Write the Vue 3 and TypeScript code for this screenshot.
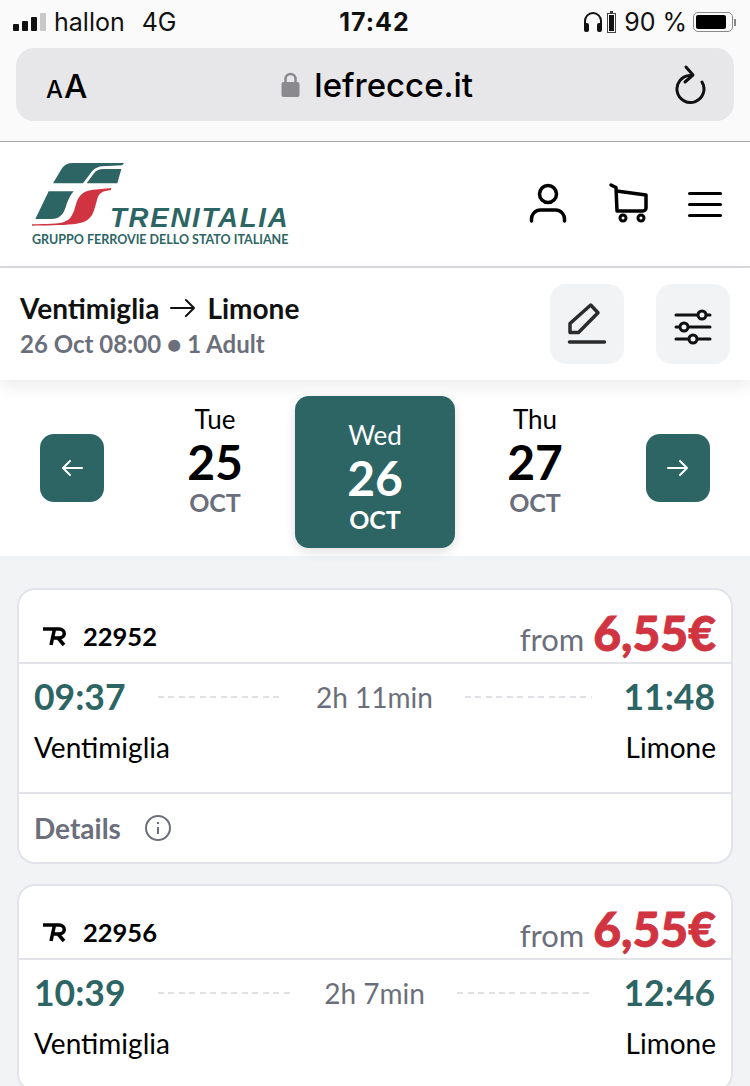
<template>
  <div class="page">
    <div class="chrome">
      <div class="status">
        <div class="status-left">
          <div class="signal">
            <i style="height: 7px"></i><i style="height: 10px"></i><i style="height: 14px"></i><i class="off" style="height: 18px"></i>
          </div>
          <span class="carrier">hallon</span>
          <span class="net">4G</span>
        </div>
        <div class="clock">17:42</div>
        <div class="status-right">
          <svg width="20" height="22" viewBox="0 0 20 22" fill="none">
            <path d="M2 15v-5a8 8 0 0 1 16 0v5" stroke="#111" stroke-width="2" />
            <rect x="1" y="12" width="5" height="9" rx="2" fill="#111" />
            <rect x="14" y="12" width="5" height="9" rx="2" fill="#111" />
          </svg>
          <svg width="9" height="22" viewBox="0 0 9 22">
            <rect x="3" y="0" width="3" height="2" fill="#333" />
            <rect x="0.500" y="2.500" width="8" height="19" fill="none" stroke="#444" />
            <rect x="2" y="4" width="5" height="16" fill="#111" />
          </svg>
          <span class="pct">90 %</span>
          <div class="battery"><div class="battery-fill"></div></div>
          <i class="battery-nub"></i>
        </div>
      </div>
      <div class="urlbar">
        <div class="aa"><small>A</small>A</div>
        <div class="url">
          <svg width="19" height="28" viewBox="0 0 19 28" fill="none">
            <path d="M4.500 12V8a5 5 0 0 1 10 0v4" stroke="#8a8a8e" stroke-width="2.500" />
            <rect x="0.500" y="11" width="18" height="15" rx="2" fill="#8a8a8e" />
          </svg>
          <span>lefrecce.it</span>
        </div>
        <svg class="reload" width="32" height="42" viewBox="0 0 32 42" fill="none" stroke="#111" stroke-width="3" stroke-linecap="round" stroke-linejoin="round">
          <path d="M15 11.500A13.500 13.500 0 1 0 27 18" />
          <path d="M11 3l7 8-8 7" />
        </svg>
      </div>
    </div>

    <header class="site-header">
      <div class="logo">
        <svg class="emblem" width="105" height="72" viewBox="0 0 315 216">
          <path d="M75 76 102 31C109 20 120 15 135 15H288L283 22 222 25C204 27 194 36 186 48L165 76Z" fill="#2c6564" />
          <path d="M176 76 198 46C206 36 214 33 226 33H280L268 76Z" fill="#2c6564" />
          <path d="M22 183 62 100H137C126 112 118 130 113 148 106 170 94 183 70 183Z" fill="#2c6564" />
          <path d="M12 199C60 198 88 198 108 192 130 185 137 165 143 142 150 116 162 100 190 96L250 90 248 97C224 99 214 104 208 122 204 136 201 150 195 165 186 186 166 196 135 199 100 202 50 203 12 203Z" fill="#cf3440" />
        </svg>
        <div class="logo-name">TRENITALIA</div>
        <div class="logo-sub">GRUPPO FERROVIE DELLO STATO ITALIANE</div>
      </div>
      <div class="header-icons">
        <svg width="40" height="44" viewBox="0 0 40 44" fill="none" stroke="#000" stroke-width="3.500" stroke-linecap="round">
          <circle cx="20" cy="12" r="8.500" />
          <path d="M3.500 39v-2a9 9 0 0 1 9-9h15a9 9 0 0 1 9 9v2" />
        </svg>
        <svg width="40" height="44" viewBox="0 0 40 44" fill="none" stroke="#000" stroke-width="3.500" stroke-linecap="round" stroke-linejoin="round">
          <path d="M3 3l5 2.500L9 29h26a3 3 0 0 0 3-3V13L8.500 9" />
          <circle cx="15" cy="36" r="3" stroke-width="3" />
          <circle cx="33" cy="36" r="3" stroke-width="3" />
        </svg>
        <div class="burger"><i></i><i></i><i></i></div>
      </div>
    </header>

    <section class="summary">
      <div>
        <div class="route">
          <span>Ventimiglia</span>
          <svg width="28" height="20" viewBox="0 0 28 20" fill="none" stroke="#111" stroke-width="2" stroke-linecap="round" stroke-linejoin="round">
            <path d="M2 10h23M17 2l8 8-8 8" />
          </svg>
          <span>Limone</span>
        </div>
        <div class="trip-meta">26 Oct 08:00 ● 1 Adult</div>
      </div>
      <div class="summary-actions">
        <button class="tool">
          <svg width="44" height="46" viewBox="0 0 44 46" fill="none" stroke="#2b2b2b" stroke-width="3.500" stroke-linecap="round" stroke-linejoin="round">
            <path d="M5 31.500v-9L25.700 4l7.300 7.700-19.500 19.800z" />
            <path d="M4.500 41h35" />
          </svg>
        </button>
        <button class="tool">
          <svg class="sliders" width="38" height="36" viewBox="0 0 38 36" fill="none" stroke="#111" stroke-width="3" stroke-linecap="round">
            <path d="M2 6h34M2 18h34M2 30h34" />
            <circle cx="28" cy="6" r="4" fill="#f2f3f5" />
            <circle cx="10" cy="18" r="4" fill="#f2f3f5" />
            <circle cx="19" cy="30" r="4" fill="#f2f3f5" />
          </svg>
        </button>
      </div>
    </section>

    <section class="dates">
      <button class="nav">
        <svg width="24" height="20" viewBox="0 0 24 20" fill="none" stroke="#fff" stroke-width="2" stroke-linecap="round" stroke-linejoin="round">
          <path d="M22 10H3M10 3l-7 7 7 7" />
        </svg>
      </button>
      <div class="day-strip">
        <div v-for="d in days" :key="d.num" class="day" :class="{ active: d.active }">
          <div class="dow">{{ d.dow }}</div>
          <div class="num">{{ d.num }}</div>
          <div class="mon">OCT</div>
        </div>
      </div>
      <button class="nav">
        <svg width="24" height="20" viewBox="0 0 24 20" fill="none" stroke="#fff" stroke-width="2" stroke-linecap="round" stroke-linejoin="round">
          <path d="M2 10h19M14 3l7 7-7 7" />
        </svg>
      </button>
    </section>

    <main class="results">
      <article v-for="(t, i) in trains" :key="t.id" class="card">
        <div class="card-top">
          <div class="train">
            <svg width="24" height="22" viewBox="0 0 24 22" fill="none" stroke="#000" stroke-width="3.500">
              <path d="M0 4h16c7 0 7 9 0 9H8M11.500 4 8 20M15 13l6 7" />
            </svg>
            <span>{{ t.id }}</span>
          </div>
          <div class="price"><span class="from">from</span> <b>6,55€</b></div>
        </div>
        <div class="card-body">
          <div class="times">
            <span class="time">{{ t.dep }}</span>
            <span class="dash"></span>
            <span class="dur">{{ t.dur }}</span>
            <span class="dash"></span>
            <span class="time">{{ t.arr }}</span>
          </div>
          <div class="places">
            <span>Ventimiglia</span>
            <span>Limone</span>
          </div>
        </div>
        <!-- second card's footer falls below the fold -->
        <div v-if="i === 0" class="card-foot">
          <span>Details</span>
          <svg width="26" height="26" viewBox="0 0 26 26" fill="none" stroke="#6b6f7b" stroke-width="2">
            <circle cx="13" cy="13" r="12" />
            <path d="M13 12v7M13 7v2" />
          </svg>
        </div>
      </article>
    </main>
  </div>
</template>

<script setup lang="ts">
const days = [
  { dow: 'Tue', num: 25, active: false },
  { dow: 'Wed', num: 26, active: true },
  { dow: 'Thu', num: 27, active: false }
]

const trains = [
  { id: '22952', dep: '09:37', arr: '11:48', dur: '2h 11min' },
  { id: '22956', dep: '10:39', arr: '12:46', dur: '2h 7min' }
]
</script>

<style>
html,
body {
  margin: 0;
  height: 1086px;
  overflow: hidden;
  background: #f2f3f5;
}
</style>

<style scoped>
.page {
  width: 750px;
  height: 1086px;
  overflow: hidden;
  font-family: Lato, "Liberation Sans", sans-serif;
  background: #f2f3f5;
  color: #000;
}

.chrome {
  height: 142px;
  box-sizing: border-box;
  background: #fafafa;
  border-bottom: 1px solid #aaa;
  padding: 0 16px;
  font-family: Inter, "Liberation Sans", sans-serif;
}

.status {
  height: 44px;
  margin-bottom: 4px;
  display: flex;
  align-items: center;
  justify-content: space-between;
  font-size: 25px;
  color: #111;
}

.status-left {
  display: flex;
  align-items: center;
  width: 270px;
  margin-left: -3px;
}

.signal {
  display: flex;
  align-items: flex-end;
  gap: 3px;
  height: 18px;
  margin-right: 8px;
}

.signal i {
  width: 6px;
  background: #111;
  border-radius: 1px;
}

.signal i.off {
  background: #c8c8c8;
}

.carrier {
  margin-right: 17px;
}

.clock {
  font-weight: 700;
  letter-spacing: 1px;
}

.status-right {
  width: 270px;
  display: flex;
  align-items: center;
  justify-content: flex-end;
  gap: 4px;
  margin-right: -2px;
}

.pct {
  margin: 0 2px 0 4px;
}

.battery {
  width: 40px;
  height: 20px;
  box-sizing: border-box;
  border: 1.500px solid #888;
  border-radius: 5px;
  padding: 2px;
}

.battery-fill {
  width: 88%;
  height: 100%;
  background: #000;
  border-radius: 2px;
}

.battery-nub {
  width: 2px;
  height: 7px;
  margin-left: -3px;
  background: #888;
}

.urlbar {
  height: 73px;
  background: #e7e7e9;
  border-radius: 18px;
  display: flex;
  align-items: center;
  justify-content: space-between;
  padding: 0 27px 0 30px;
}

.aa {
  font-size: 33px;
  line-height: 1;
  font-weight: 500;
  margin-top: 4px;
}

.aa small {
  font-size: 24px;
  margin-right: 1px;
}

.url {
  display: flex;
  align-items: center;
  gap: 14px;
  font-size: 33px;
  font-weight: 500;
  margin-right: 8px;
}

.site-header {
  height: 126px;
  box-sizing: border-box;
  background: #fff;
  border-bottom: 2px solid #d9d9de;
  display: flex;
  align-items: center;
  justify-content: space-between;
  padding: 0 28px 0 32px;
}

.logo {
  position: relative;
  width: 256px;
  height: 92px;
}

.emblem {
  position: absolute;
  left: -4px;
  top: 0;
}

.logo-name {
  position: absolute;
  left: 78px;
  top: 44px;
  font: italic 700 27.500px "Liberation Sans", sans-serif;
  color: #2c6564;
  letter-spacing: 1.800px;
  white-space: nowrap;
}

.logo-sub {
  position: absolute;
  left: 0;
  top: 74px;
  font-size: 12.500px;
  font-weight: 700;
  color: #2c6564;
  white-space: nowrap;
}

.header-icons {
  display: flex;
  align-items: center;
  gap: 40px;
}

.burger {
  width: 34px;
  display: flex;
  flex-direction: column;
  gap: 8px;
}

.burger i {
  height: 3px;
  background: #000;
  border-radius: 2px;
}

.summary {
  position: relative;
  z-index: 2;
  height: 112px;
  box-sizing: border-box;
  background: #fff;
  box-shadow: 0 6px 16px rgba(0, 0, 0, 0.08);
  display: flex;
  align-items: center;
  justify-content: space-between;
  padding: 0 20px;
}

.route {
  display: flex;
  align-items: center;
  gap: 10px;
  font-size: 28px;
  font-weight: 700;
  color: #111;
  line-height: 36px;
}

.trip-meta {
  font-size: 24px;
  font-weight: 700;
  color: #6b6f7b;
  margin-top: 3px;
}

.summary-actions {
  display: flex;
  gap: 32px;
}

.tool {
  width: 74px;
  height: 80px;
  border: 0;
  border-radius: 16px;
  background: #f2f3f5;
  display: flex;
  align-items: center;
  justify-content: center;
  padding: 0;
}

.sliders {
  margin-top: 6px;
}

.dates {
  height: 176px;
  background: #fff;
  display: flex;
  align-items: flex-start;
  justify-content: space-between;
  padding: 16px 40px 0;
  box-sizing: border-box;
}

.nav {
  width: 64px;
  height: 68px;
  margin-top: 38px;
  border: 0;
  border-radius: 14px;
  background: #2c6564;
  display: flex;
  align-items: center;
  justify-content: center;
  padding: 0;
}

.day-strip {
  display: flex;
}

.day {
  width: 160px;
  height: 152px;
  text-align: center;
  box-sizing: border-box;
  padding-top: 8px;
}

.day.active {
  background: #2c6564;
  color: #fff;
  border-radius: 14px;
  box-shadow: 0 4px 12px rgba(0, 0, 0, 0.12);
  padding-top: 24px;
}

.dow {
  font-size: 26px;
  line-height: 30px;
}

.num {
  font-size: 48px;
  font-weight: 700;
  line-height: 50px;
  margin-top: 3px;
}

.mon {
  font-size: 25px;
  font-weight: 700;
  line-height: 30px;
  color: #6b6f7b;
}

.day.active .mon {
  color: #fff;
  margin-top: 1px;
}

.results {
  padding: 32px 17px 0;
  display: flex;
  flex-direction: column;
  gap: 20px;
}

.card {
  background: #fff;
  border: 2px solid #e3e4e9;
  border-radius: 18px;
  flex-shrink: 0;
}

.card-top {
  height: 74px;
  box-sizing: border-box;
  border-bottom: 2px solid #e3e4e9;
  display: flex;
  align-items: center;
  justify-content: space-between;
  padding: 15px 15px 0 24px;
}

.train {
  display: flex;
  align-items: center;
  gap: 16px;
  font-size: 25.500px;
  font-weight: 700;
  margin-top: 5px;
}

.price {
  display: flex;
  align-items: baseline;
  gap: 9px;
}

.from {
  font-size: 31px;
  color: #6b6f7b;
}

.price b {
  font-size: 48px;
  font-weight: 900;
  color: #cf3440;
  line-height: 1;
  -webkit-text-stroke: 0.800px #cf3440;
}

.card-body {
  height: 130px;
  box-sizing: border-box;
  padding: 11px 15px 0 15px;
  border-bottom: 2px solid #e3e4e9;
}

.times {
  display: flex;
  align-items: center;
  justify-content: space-between;
  gap: 32px;
  margin-right: 1px;
}

.time {
  font-size: 35.500px;
  font-weight: 700;
  color: #2c6564;
  line-height: 44px;
}

.dash {
  flex: 1;
  height: 2px;
  background: repeating-linear-gradient(90deg, #e0e1e5 0 6px, transparent 6px 10.500px);
}

.dur {
  font-size: 28px;
  color: #6b6f7b;
}

.places {
  display: flex;
  justify-content: space-between;
  font-size: 28px;
  line-height: 34px;
  margin-top: 11px;
}

.card-foot {
  height: 68px;
  display: flex;
  align-items: center;
  gap: 24px;
  padding-left: 15px;
  font-size: 28px;
  font-weight: 700;
  color: #6b6f7b;
}
</style>
